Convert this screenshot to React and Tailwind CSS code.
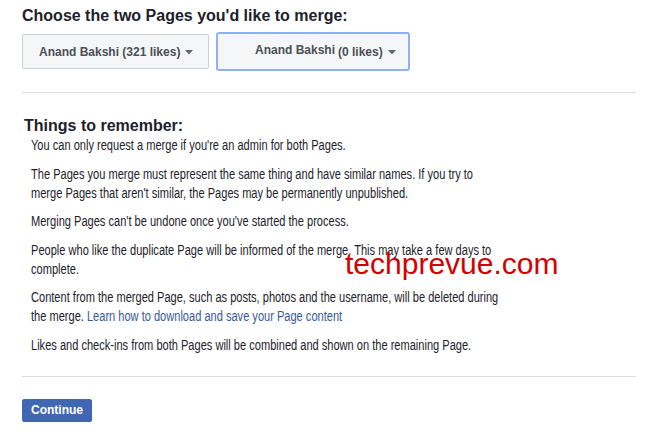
import React from 'react';

const Caret = () => (
    <svg width="8" height="5" viewBox="0 0 8 5" className="ml-[5px] mt-[1px]">
        <path d="M0 0 L8 0 L4 4.5 Z" fill="#606770" />
    </svg>
);

const notes = [
    "You can only request a merge if you're an admin for both Pages.",
    "The Pages you merge must represent the same thing and have similar names. If you try to merge Pages that aren't similar, the Pages may be permanently unpublished.",
    "Merging Pages can't be undone once you've started the process.",
    "People who like the duplicate Page will be informed of the merge. This may take a few days to complete.",
];

export default function App() {
    return (
        <div className="relative w-[654px] h-[442px] bg-white overflow-hidden pl-[22px] pt-[6px] text-[#1d2129] font-['Liberation_Sans',Arial,sans-serif]">
            {/* Page pickers */}
            <h2 className="text-[16px] leading-[20px] font-bold">Choose the two Pages you'd like to merge:</h2>
            <div className="flex items-start mt-[8px]">
                <button className="flex items-center w-[187px] h-[35px] pl-[16px] bg-[#f5f6f7] border border-[#ccd0d5] rounded-[2px] text-[12px] font-bold text-[#4b4f56]">
                    Anand Bakshi (321 likes)
                    <Caret />
                </button>
                <button className="flex items-center w-[194px] h-[39px] -mt-[2px] ml-[7px] pl-[37px] bg-[#f5f6f7] border-2 border-[#8fb1f2] rounded-[3px] text-[12px] font-bold text-[#4b4f56]">
                    <span className="-mt-[3px]">Anand Bakshi</span>
                    <span className="ml-[3px]">(0 likes)</span>
                    <Caret />
                </button>
            </div>

            <div className="mt-[21px] w-[614px] h-px bg-[#dadde1]" />

            {/* Things to remember */}
            <h3 className="mt-[23px] ml-[2px] text-[16px] leading-[20px] font-bold">Things to remember:</h3>
            <div className="ml-[9px] w-[600px] flex flex-col gap-[9.5px] text-[14px] leading-[19px] scale-x-[0.79] origin-left">
                {notes.map((n) => (
                    <p key={n}>{n}</p>
                ))}
                <p>
                    Content from the merged Page, such as posts, photos and the username, will be deleted during the merge.{' '}
                    <a className="text-[#365899]">Learn how to download and save your Page content</a>
                </p>
                <p>Likes and check-ins from both Pages will be combined and shown on the remaining Page.</p>
            </div>

            <div className="mt-[21px] w-[614px] h-px bg-[#dadde1]" />

            <button className="mt-[22px] h-[23px] px-[8px] bg-[#4267b2] border border-[#4267b2] rounded-[2px] text-[12px] font-bold text-white">
                Continue
            </button>

            {/* watermark */}
            <div className="absolute left-[345px] top-[246px] text-[30px] leading-[36px] text-[#d40000]">
                techprevue.com
            </div>
        </div>
    );
}
